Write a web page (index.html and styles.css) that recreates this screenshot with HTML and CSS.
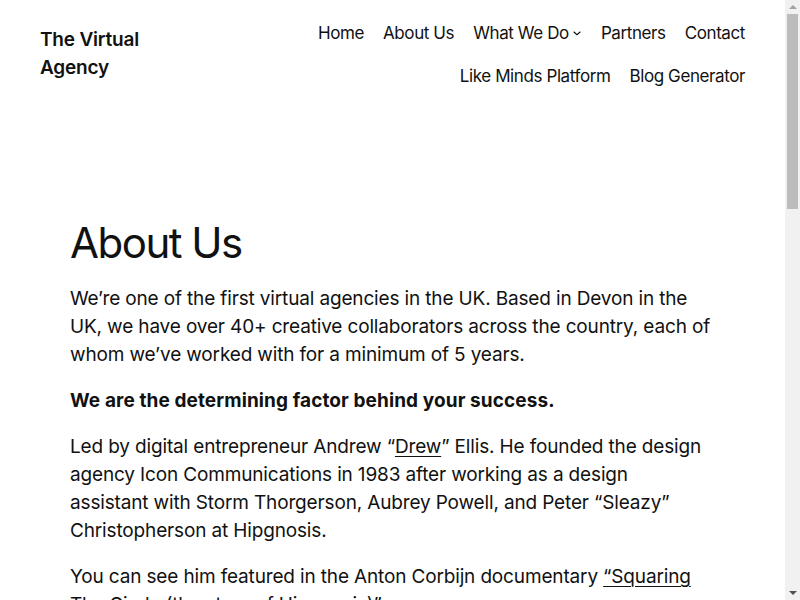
FILE: index.html
```html
<!DOCTYPE html>
<html lang="en">
<head>
<meta charset="utf-8">
<title>About Us – The Virtual Agency</title>
<link rel="stylesheet" href="styles.css">
</head>
<body>
<div class="page">
<header class="site-header">
  <div class="site-title">The Virtual Agency</div>
  <nav class="site-nav">
    <ul class="nav-list">
      <li><a href="#">Home</a></li>
      <li><a href="#">About Us</a></li>
      <li class="has-sub"><a href="#">What We Do</a><svg class="chev" width="10" height="10" viewBox="0 0 12 12"><path d="M2 4.5 L6 8 L10 4.5" fill="none" stroke="#111" stroke-width="1.4"/></svg></li>
      <li><a href="#">Partners</a></li>
      <li><a href="#">Contact</a></li>
      <li><a href="#">Like Minds Platform</a></li>
      <li><a href="#">Blog Generator</a></li>
    </ul>
  </nav>
</header>
<main class="content">
  <h1 class="page-title">About Us</h1>
  <p>We’re one of the first virtual agencies in the UK. Based in Devon in the UK, we have over 40+ creative collaborators across the country, each of whom we’ve worked with for a minimum of 5 years.</p>
  <p><strong>We are the determining factor behind your success.</strong></p>
  <p>Led by digital entrepreneur Andrew “<a href="#">Drew</a>” Ellis. He founded the design agency Icon Communications in 1983 after working as a design<br>assistant with Storm Thorgerson, Aubrey Powell, and Peter “Sleazy” Christopherson at Hipgnosis.</p>
  <p>You can see him featured in the Anton Corbijn documentary <a href="#">“Squaring The Circle (the story of Hipgnosis)”</a>.</p>
  <p>Drew has worked with a huge range of clients over the last four decades, from start-ups and local businesses to household names and global brands, always with the same focus on creative ideas that deliver real results.</p>
  <p>Our collaborators include designers, developers, copywriters, photographers, illustrators, animators, marketers and strategists, all of whom work remotely and come together as one team for each project.</p>
  <p>Because we don’t have the overheads of a traditional agency, we can offer the same quality of work at a fraction of the cost, and pass those savings directly on to you.</p>
  <p>Whatever your challenge, we have the people and the experience to help you meet it. Get in touch today to find out how we can help your business grow.</p>
  <p>We look forward to hearing from you.</p>
</main>
</div>
<div class="scrollbar" aria-hidden="true">
  <span class="sb-up"></span>
  <span class="sb-thumb"></span>
  <span class="sb-down"></span>
</div>
</body>
</html>
```
FILE: styles.css
```css
html, body {
  margin: 0;
  padding: 0;
}
body {
  font-family: Inter, "Noto Sans", sans-serif;
  color: #111111;
  background: #ffffff;
  font-size: 19px;
  line-height: 28px;
  -webkit-font-smoothing: antialiased;
}
.page {
  margin-right: 15px;
}
a {
  color: #111111;
}
.site-header {
  display: flex;
  justify-content: space-between;
  align-items: flex-start;
  padding: 20px 40px 0 40px;
}
.site-title {
  font-size: 19px;
  font-weight: 600;
  line-height: 28px;
  width: 120px;
  padding-top: 6px;
  letter-spacing: -0.2px;
}
.site-nav {
  width: 480px;
}
.nav-list {
  list-style: none;
  margin: 0;
  padding: 0;
  display: flex;
  flex-wrap: wrap;
  justify-content: flex-end;
  column-gap: 19px;
  row-gap: 17px;
}
.nav-list li {
  display: flex;
  align-items: center;
  font-size: 17px;
  line-height: 26px;
  letter-spacing: -0.4px;
}
.nav-list a {
  text-decoration: none;
  color: #111111;
}
.chev {
  margin-left: 3px;
}
.content {
  width: 648px;
  padding: 129px 0 80px 70px;
}
.page-title {
  font-size: 42px;
  font-weight: 400;
  line-height: 50px;
  letter-spacing: -1.5px;
  margin: 0 0 17px 0;
}
.content p {
  margin: 0 0 18px 0;
  letter-spacing: -0.15px;
}
.content strong {
  font-weight: 700;
  letter-spacing: 0.1px;
}
.content a {
  text-decoration: underline;
  text-underline-offset: 3px;
  text-decoration-thickness: 1px;
}
.scrollbar {
  position: fixed;
  top: 0;
  right: 0;
  width: 15px;
  height: 100%;
  background: #f1f1f1;
}
.sb-thumb {
  position: absolute;
  left: 2px;
  top: 14px;
  width: 11px;
  height: 195px;
  background: #bcbcbc;
}
.sb-up {
  position: absolute;
  left: 4px;
  top: 5px;
  width: 0;
  height: 0;
  border-left: 4px solid transparent;
  border-right: 4px solid transparent;
  border-bottom: 4px solid #a3a3a3;
}
.sb-down {
  position: absolute;
  left: 4px;
  bottom: 5px;
  width: 0;
  height: 0;
  border-left: 4px solid transparent;
  border-right: 4px solid transparent;
  border-top: 4px solid #505050;
}
```
